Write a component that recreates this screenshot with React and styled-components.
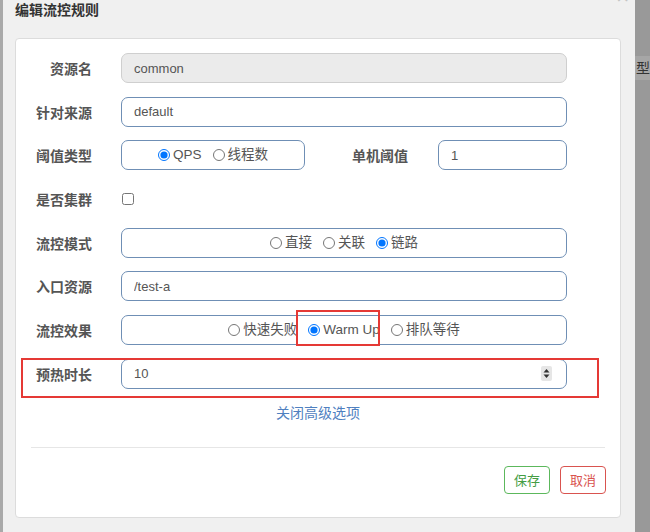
import React from "react";
import styled, { createGlobalStyle } from "styled-components";

const GlobalStyle = createGlobalStyle`
  html, body {
    margin: 0;
    padding: 0;
    background: #9c9c9c;
  }
  * {
    box-sizing: border-box;
  }
`;

const FONT = `"Liberation Sans", "Noto Sans CJK SC", sans-serif`;

const App = () => {
  return (
    <>
      <GlobalStyle />
      <Page>
        <LeftEdge />
        <Modal>
          <Header>
            <Title>编辑流控规则</Title>
            <CloseX>×</CloseX>
          </Header>
          <Card>
            <Form>
              <Row>
                <Label>资源名</Label>
                <Input disabled value="common" readOnly />
              </Row>
              <Row>
                <Label>针对来源</Label>
                <Input value="default" readOnly />
              </Row>
              <Row>
                <Label>阈值类型</Label>
                <Inline>
                  <RadioBox width="184px">
                    <Option>
                      <Radio type="radio" name="grade" defaultChecked />
                      QPS
                    </Option>
                    <Option>
                      <Radio type="radio" name="grade" />
                      线程数
                    </Option>
                  </RadioBox>
                  <SubLabel>单机阈值</SubLabel>
                  <Input value="1" readOnly width="129px" />
                </Inline>
              </Row>
              <Row>
                <Label>是否集群</Label>
                <Check type="checkbox" />
              </Row>
              <Row>
                <Label>流控模式</Label>
                <RadioBox>
                  <Option>
                    <Radio type="radio" name="mode" />
                    直接
                  </Option>
                  <Option>
                    <Radio type="radio" name="mode" />
                    关联
                  </Option>
                  <Option>
                    <Radio type="radio" name="mode" defaultChecked />
                    链路
                  </Option>
                </RadioBox>
              </Row>
              <Row>
                <Label>入口资源</Label>
                <Input value="/test-a" readOnly />
              </Row>
              <Row>
                <Label>流控效果</Label>
                <RadioBox>
                  <Option>
                    <Radio type="radio" name="effect" />
                    快速失败
                  </Option>
                  <Option>
                    <Radio type="radio" name="effect" defaultChecked />
                    Warm Up
                    <OptionMark />
                  </Option>
                  <Option>
                    <Radio type="radio" name="effect" />
                    排队等待
                  </Option>
                </RadioBox>
              </Row>
              <Row>
                <Label>预热时长</Label>
                <NumberField>
                  <NumberValue>10</NumberValue>
                  <Spinner width="11" height="15" viewBox="0 0 11 15">
                    <rect x="0" y="0" width="11" height="15" rx="2" fill="#e6e6e6" />
                    <path d="M5.5 3 L8.5 6.5 L2.5 6.5 Z" fill="#333" />
                    <path d="M5.5 12 L8.5 8.5 L2.5 8.5 Z" fill="#333" />
                  </Spinner>
                </NumberField>
                <RowMark />
              </Row>
            </Form>
            <Toggle>关闭高级选项</Toggle>
            <Divider />
            <Footer>
              <Button tone="save">保存</Button>
              <Button tone="cancel">取消</Button>
            </Footer>
          </Card>
        </Modal>
        <RightEdge>
          <Peek>型</Peek>
        </RightEdge>
      </Page>
    </>
  );
};

export default App;

const Page = styled.div`
  display: flex;
  width: 650px;
  height: 532px;
  overflow: hidden;
  font-family: ${FONT};
`;
const LeftEdge = styled.div`
  flex: 0 0 3px;
  background: #a9a9a9;
`;
const Modal = styled.div`
  flex: 0 0 632px;
  background: #f0f0f0;
  padding: 0 14px 0 12px;
`;
const Header = styled.div`
  display: flex;
  justify-content: space-between;
  height: 38px;
`;
const Title = styled.div`
  font-size: 14px;
  line-height: 18px;
  font-weight: bold;
  color: #333;
  padding-top: 1px;
`;
const CloseX = styled.div`
  font-size: 22px;
  line-height: 22px;
  color: #c4c4c4;
  margin-top: -14px;
  margin-right: -8px;
`;
const Card = styled.div`
  height: 480px;
  background: #fff;
  border: 1px solid #dcdcdc;
  border-radius: 4px;
  display: flex;
  flex-direction: column;
`;
const Form = styled.div`
  display: flex;
  flex-direction: column;
  gap: 13.7px;
  padding-top: 14px;
`;
const Row = styled.div`
  position: relative;
  display: grid;
  grid-template-columns: 76px 446px;
  column-gap: 29px;
  align-items: center;
  height: 30px;
`;
const Label = styled.div`
  text-align: right;
  font-size: 14px;
  font-weight: bold;
  color: #555;
`;
const Input = styled.input`
  width: ${(p) => p.width || "100%"};
  height: 30px;
  border: 1px solid ${(p) => (p.disabled ? "#cfcfcf" : "#6f8fb5")};
  background: ${(p) => (p.disabled ? "#ebebeb" : "#fff")};
  border-radius: 7px;
  padding: 0 12px;
  font-family: ${FONT};
  font-size: 13px;
  color: #555;
  outline: none;
`;
const Inline = styled.div`
  display: flex;
  align-items: center;
`;
const SubLabel = styled.div`
  width: 56px;
  margin: 0 30px 0 47px;
  font-size: 14px;
  font-weight: bold;
  color: #555;
`;
const RadioBox = styled.div`
  width: ${(p) => p.width || "100%"};
  height: 30px;
  border: 1px solid #6f8fb5;
  border-radius: 7px;
  display: flex;
  align-items: center;
  justify-content: center;
  gap: 11px;
  font-size: 13.5px;
  color: #555;
`;
const Option = styled.label`
  position: relative;
  display: inline-flex;
  align-items: center;
  line-height: 16px;
`;
const Radio = styled.input`
  width: 12px;
  height: 12px;
  margin: 0 3px 0 0;
`;
const Check = styled.input`
  width: 12px;
  height: 12px;
  margin: 0 0 0 1px;
`;
const OptionMark = styled.span`
  position: absolute;
  left: -12px;
  top: -12px;
  width: 84px;
  height: 36px;
  border: 2px solid #e53935;
  pointer-events: none;
`;
const RowMark = styled.span`
  position: absolute;
  left: 5px;
  top: -1px;
  width: 578px;
  height: 40px;
  border: 2px solid #e53935;
  pointer-events: none;
`;
const NumberField = styled.div`
  height: 30px;
  border: 1px solid #6f8fb5;
  border-radius: 7px;
  padding: 0 14px 0 12px;
  display: flex;
  align-items: center;
  justify-content: space-between;
`;
const NumberValue = styled.span`
  font-size: 13px;
  color: #555;
`;
const Spinner = styled.svg`
  display: block;
`;
const Toggle = styled.div`
  margin-top: 14px;
  text-align: center;
  font-size: 14px;
  line-height: 20px;
  color: #4f80c0;
`;
const Divider = styled.div`
  margin: 24px 15px 0;
  height: 1px;
  background: #e6e6e6;
`;
const Footer = styled.div`
  display: flex;
  justify-content: flex-end;
  gap: 10px;
  padding: 18px 14px 0 0;
`;
const Button = styled.button`
  width: 46px;
  height: 28px;
  padding: 0;
  background: #fff;
  border: 1px solid ${(p) => (p.tone === "save" ? "#5cb85c" : "#d9534f")};
  color: ${(p) => (p.tone === "save" ? "#449d44" : "#d9534f")};
  border-radius: 4px;
  font-family: ${FONT};
  font-size: 13px;
`;
const RightEdge = styled.div`
  flex: 0 0 15px;
  height: 532px;
  background-color: #999999;
  padding-top: 56px;
`;
const Peek = styled.div`
  height: 24px;
  background-color: #a6a6a6;
  font-size: 14px;
  line-height: 24px;
  color: #333;
  padding-left: 1px;
  overflow: hidden;
  white-space: nowrap;
`;
